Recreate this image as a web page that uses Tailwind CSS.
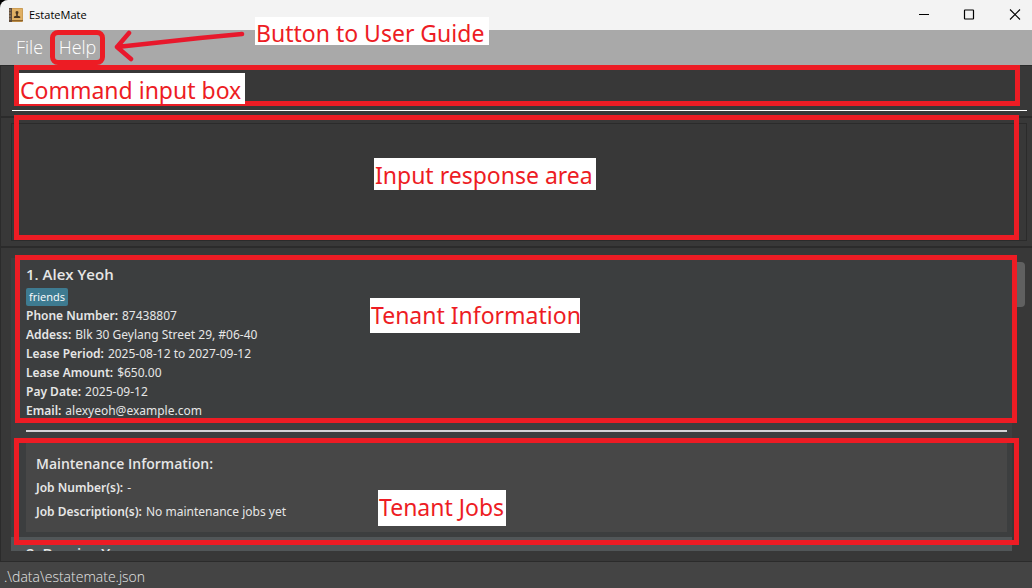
<!DOCTYPE html>
<html lang="en">
<head>
<meta charset="utf-8">
<title>EstateMate</title>
<script src="https://cdn.jsdelivr.net/npm/@tailwindcss/browser@4"></script>
</head>
<body class="bg-black font-['Open_Sans',sans-serif] text-[#e6e6e6]">
<div class="flex h-screen flex-col overflow-hidden rounded-tl-lg bg-[#383838]">

  <header class="flex h-[30px] shrink-0 items-center bg-[#f3f3f3] pl-[9px] text-black">
    <svg class="mr-[6px] h-[14px] w-[14px]" viewBox="0 0 14 14" aria-hidden="true">
      <rect width="14" height="14" rx="1" fill="#b98a45"/>
      <rect x="3" y="0.5" width="10.5" height="12" fill="#e0b064"/>
      <rect width="3" height="14" fill="#5d4a3c"/>
      <path d="M0 2h2M0 5h2M0 8h2M0 11h2" stroke="#a58a68"/>
      <path d="M3 12.5h11" stroke="#8f6429"/>
      <path d="M8 3c1.2 0 1.600.9 1.400 2L8.800 6.500v1.300l2.400.7V10H4.900V8.500l2.300-.7V6.500L6.600 5C6.400 3.900 6.800 3 8 3z" fill="#4a3520"/>
    </svg>
    <h1 class="flex-1 text-[11px]">EstateMate</h1>
    <div class="flex">
      <button class="flex h-[30px] w-[46px] items-center justify-center" aria-label="Minimize"><svg class="h-3 w-3" viewBox="0 0 12 12"><path d="M1 5.500h10" stroke="#000" fill="none"/></svg></button>
      <button class="flex h-[30px] w-[44px] items-center justify-center" aria-label="Maximize"><svg class="h-3 w-3" viewBox="0 0 12 12"><rect x="1.500" y="1" width="9" height="9" rx="0.500" stroke="#000" stroke-width="1.200" fill="none"/></svg></button>
      <button class="flex h-[30px] w-[41px] items-center justify-center pl-[7px]" aria-label="Close"><svg class="h-3 w-3" viewBox="0 0 12 12"><path d="M1 0.500l10 10M11 0.500L1 10.500" stroke="#000" stroke-width="1.100" fill="none"/></svg></button>
    </div>
  </header>

  <nav class="relative flex h-[35px] shrink-0 items-center bg-[#a9a9a9] pl-[10px] text-[18px] font-light text-white">
    <button class="w-10 pl-[6px] text-left">File</button>
    <button class="relative flex h-full w-[55px] items-center justify-center">Help
      <span class="absolute inset-0 rounded-lg border-5 border-[#ed1c24]"></span>
    </button>
    <svg class="absolute top-0 left-[110px] h-[35px] w-[140px]" viewBox="0 0 140 35" fill="none" stroke="#e8182c" stroke-width="4.500" stroke-linecap="round" stroke-linejoin="round" aria-hidden="true"><path d="M132 4L90 8L7 17M19 3L7 17L21 29"/></svg>
    <div class="absolute -top-[13px] left-[255px] h-7 w-[234px] bg-white pl-px text-[23px] leading-[32px] font-normal whitespace-nowrap text-[#ed1c24] font-['Noto_Sans',sans-serif]">Button to User Guide</div>
  </nav>

  <section class="relative h-[51px] shrink-0 border-t border-l border-[#2b2b2b] pt-1 pr-[5px] pl-[11px]">
    <input type="text" aria-label="Command" class="block h-[41px] w-full border-b border-white bg-transparent px-2 outline-none">
    <div class="pointer-events-none absolute -top-px right-3 left-[13px] h-[41px] border-5 border-[#ed1c24]"></div>
    <div class="absolute top-[7px] left-[18px] h-[31px] w-[226px] bg-white pl-px text-[23px] leading-[34px] whitespace-nowrap text-[#ed1c24] font-['Noto_Sans',sans-serif]">Command input box</div>
  </section>

  <section class="relative h-[130px] shrink-0 border-t-2 border-l border-[#2b2b2b] pt-[5px] pr-[5px] pl-[10px]">
    <output class="block h-[118px] border border-[#2b2b2b]"></output>
    <div class="absolute -top-[3px] right-[13px] left-[13px] h-[125px] border-5 border-[#ed1c24]"></div>
    <div class="absolute top-10 left-[373px] h-8 w-[222px] bg-white pl-px text-[23px] leading-[34px] whitespace-nowrap text-[#ed1c24] font-['Noto_Sans',sans-serif]">Input response area</div>
  </section>

  <main class="relative flex min-h-0 flex-1 flex-col border-t-2 border-l border-[#2b2b2b] pt-[10px] pr-5 pb-[10px] pl-[10px]">
    <ol class="min-h-0 flex-1 overflow-hidden">
      <li class="bg-[#3c3e3f] pt-[5px] pr-[5px] pb-[5px] pl-[15px]">
        <h2 class="mb-[2px] text-[15px] leading-[23px] font-semibold">1. Alex Yeoh</h2>
        <span class="block h-[18px] w-fit rounded-xs bg-[#3e7b91] px-[3px] text-[11px] leading-[18px] text-white">friends</span>
        <dl class="text-[12px] leading-[19px] font-['Noto_Sans',sans-serif]">
          <div class="flex gap-1"><dt class="font-semibold">Phone Number:</dt><dd>87438807</dd></div>
          <div class="flex gap-1"><dt class="font-semibold">Addess:</dt><dd>Blk 30 Geylang Street 29, #06-40</dd></div>
          <div class="flex gap-1"><dt class="font-semibold">Lease Period:</dt><dd>2025-08-12 to 2027-09-12</dd></div>
          <div class="flex gap-1"><dt class="font-semibold">Lease Amount:</dt><dd>$650.00</dd></div>
          <div class="flex gap-1"><dt class="font-semibold">Pay Date:</dt><dd>2025-09-12</dd></div>
          <div class="flex gap-1"><dt class="font-semibold">Email:</dt><dd>alexyeoh@example.com</dd></div>
        </dl>
        <hr class="mt-[10px] mb-[10px] border-t-2 border-[#d4d2d6]">
        <div class="h-[90px] bg-[#474747] px-[10px] pt-[10px]">
          <h3 class="text-[14px] leading-[24px] font-semibold">Maintenance Information:</h3>
          <dl class="text-[12px] leading-[24px] font-['Noto_Sans',sans-serif]">
            <div class="flex gap-1"><dt class="font-semibold">Job Number(s):</dt><dd>-</dd></div>
            <div class="flex gap-1"><dt class="font-semibold">Job Description(s):</dt><dd>No maintenance jobs yet</dd></div>
          </dl>
        </div>
      </li>
      <li class="bg-[#515658] pt-[5px] pr-[5px] pl-[15px]">
        <h2 class="text-[15px] leading-[23px] font-semibold">2. Bernice Yu</h2>
      </li>
    </ol>
    <div class="absolute top-[14px] right-[7px] h-[45px] w-[9px] rounded-r bg-[#606060]"></div>
    <div class="absolute top-[7px] right-[15px] left-[14px] h-[168px] border-5 border-[#ed1c24]"></div>
    <div class="absolute top-[190px] right-[13px] left-[13px] h-[107px] border-5 border-[#ed1c24]"></div>
    <div class="absolute top-[50px] left-[369px] h-[35px] w-[210px] bg-white pl-px text-[23px] leading-[34px] whitespace-nowrap text-[#ed1c24] font-['Noto_Sans',sans-serif]">Tenant Information</div>
    <div class="absolute top-[242px] left-[377px] h-9 w-32 bg-white pl-px text-[23px] leading-[34px] whitespace-nowrap text-[#ed1c24] font-['Noto_Sans',sans-serif]">Tenant Jobs</div>
  </main>

  <footer class="h-[27px] shrink-0 border-t border-[#2b2b2b] bg-[#444444] pl-1 text-[14px] leading-[30px] font-light">.\data\estatemate.json</footer>
</div>
</body>
</html>
